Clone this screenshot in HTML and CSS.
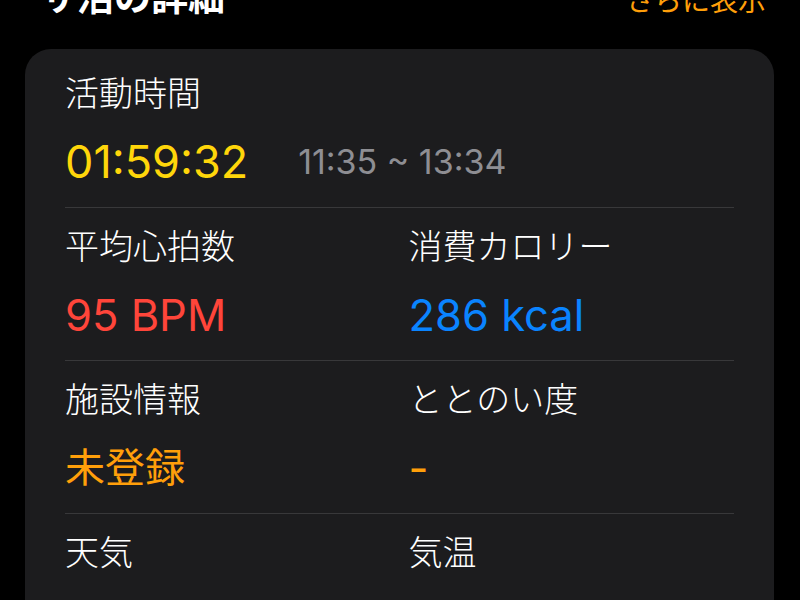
FILE: index.html
```html
<!DOCTYPE html>
<html lang="ja">
<head>
  <meta charset="UTF-8" />
  <meta name="viewport" content="width=device-width, initial-scale=1.0" />
  <title>サ活の詳細</title>
  <link rel="stylesheet" href="styles.css">
</head>
<body>
  <div class="section-head">
    <h2>サ活の詳細</h2>
    <a class="more" href="#">さらに表示</a>
  </div>

  <div class="card">
    <div class="row">
      <div class="cell">
        <div class="label">活動時間</div>
        <div class="value value-lg">
          <span class="yellow">01:59:32</span>
          <span class="range">11:35 ~ 13:34</span>
        </div>
      </div>
    </div>

    <div class="row two">
      <div class="cell">
        <div class="label">平均心拍数</div>
        <div class="value red">95 BPM</div>
      </div>
      <div class="cell">
        <div class="label">消費カロリー</div>
        <div class="value blue">286 kcal</div>
      </div>
    </div>

    <div class="row two">
      <div class="cell">
        <div class="label">施設情報</div>
        <div class="value jp orange">未登録</div>
      </div>
      <div class="cell">
        <div class="label">ととのい度</div>
        <div class="value orange">-</div>
      </div>
    </div>

    <div class="row two">
      <div class="cell">
        <div class="label">天気</div>
        <div class="value jp muted">未登録</div>
      </div>
      <div class="cell">
        <div class="label">気温</div>
        <div class="value muted">-</div>
      </div>
    </div>
  </div>
</body>
</html>
```

FILE: styles.css
```css
body {
  font-family: Inter, "Noto Sans CJK JP", sans-serif;
  background: #000;
  color: #fff;
  margin: 0;
  overflow: hidden;
}
.section-head {
  display: flex;
  justify-content: space-between;
  align-items: baseline;
  margin-top: -24px;
  padding: 0 34px 0 40px;
  height: 44px;
}
.section-head h2 {
  margin: 0;
  font-size: 37px;
  line-height: 44px;
  font-weight: 700;
}
.more {
  color: #ff9f0a;
  font-size: 28px;
  text-decoration: none;
}
.card {
  background: #1c1c1e;
  border-radius: 26px;
  margin: 29px 26px 0 25px;
  padding: 6px 40px 0;
}
.row {
  padding: 19px 0 20px;
  border-bottom: 1px solid #38383a;
}
.row:last-child {
  border-bottom: none;
}
.two {
  display: grid;
  grid-template-columns: 1fr 1fr;
  column-gap: 18px;
}
.label {
  font-size: 34px;
  line-height: 40px;
  font-weight: 300;
}
.value {
  margin-top: 23px;
  font-size: 43.5px;
  line-height: 50px;
}
.value.jp {
  font-size: 40px;
}
.value-lg {
  display: flex;
  align-items: center;
  gap: 50px;
  font-size: 45px;
}
.range {
  font-size: 34px;
  color: #8e8e93;
}
.yellow { color: #ffd60a; }
.red { color: #ff453a; }
.blue { color: #0a84ff; }
.orange { color: #ff9f0a; }
.muted { color: #a1a1a6; }
```
